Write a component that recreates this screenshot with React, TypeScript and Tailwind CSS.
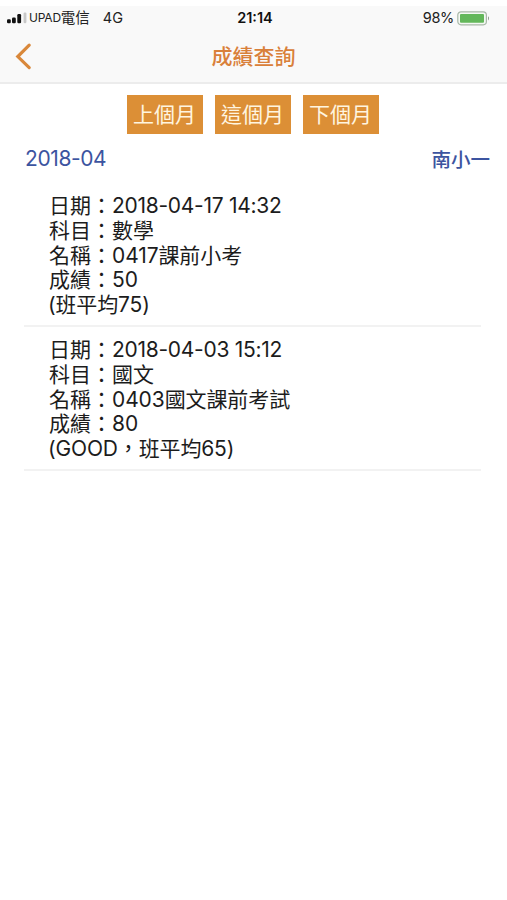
import clsx from "clsx";

type Score = {
  date: string;
  subject: string;
  name: string;
  score: string;
  note: string;
};

const scores: Score[] = [
  {
    date: "2018-04-17 14:32",
    subject: "數學",
    name: "0417課前小考",
    score: "50",
    note: "(班平均75)",
  },
  {
    date: "2018-04-03 15:12",
    subject: "國文",
    name: "0403國文課前考試",
    score: "80",
    note: "(GOOD，班平均65)",
  },
];

const months = ["上個月", "這個月", "下個月"];

function SignalIcon() {
  return (
    <svg width="20" height="12" viewBox="0 0 20 12" className="shrink-0">
      <rect x="0" y="7.2" width="3.8" height="4" rx="1.2" fill="#111" />
      <rect x="5" y="5.6" width="3.8" height="5.6" rx="1.2" fill="#111" />
      <rect x="10.3" y="2" width="3.8" height="9.2" rx="1.2" fill="#111" />
      <rect x="16.6" y="0.4" width="2.8" height="10.8" rx="1.2" fill="#c8c8c8" />
    </svg>
  );
}

function BatteryIcon() {
  return (
    <svg width="33" height="15" viewBox="0 0 33 15" className="shrink-0">
      <rect
        x="0.8"
        y="0.8"
        width="28.6"
        height="13"
        rx="3.2"
        fill="#f4f8f3"
        stroke="#a9b8a8"
        strokeWidth="1.2"
      />
      <rect x="3" y="3" width="24" height="8.8" rx="1" fill="#63b75a" />
      <path d="M31 5.2c1.3.6 1.3 3.6 0 4.2z" fill="#8c968b" />
    </svg>
  );
}

function StatusBar() {
  return (
    <div className="grid h-6 grid-cols-[1fr_auto_1fr] items-center pr-1 pl-[7px] text-[#222]">
      <div className="flex items-center">
        <SignalIcon />
        <span className="ml-[2px] text-[12px] tracking-[-0.2px]">UPAD</span>
        <span className="text-[14.5px]">電信</span>
        <span className="ml-[13px] text-[14.5px]">4G</span>
      </div>
      <span className="text-[14.5px] font-semibold text-[#111]">21:14</span>
      <div className="flex items-center justify-end gap-[3px] pr-[13px]">
        <span className="text-[14.5px] tracking-[-0.3px]">98%</span>
        <BatteryIcon />
      </div>
    </div>
  );
}

function NavBar() {
  return (
    <div className="grid h-[52px] grid-cols-[1fr_auto_1fr] items-center px-[15px]">
      <button className="w-fit" aria-label="back">
        <svg width="18" height="28" viewBox="0 0 18 28" fill="none">
          <path
            d="M14.2 3.2 2.8 14.6l11.4 11"
            stroke="#d9883b"
            strokeWidth="3.2"
            strokeLinecap="round"
          />
        </svg>
      </button>
      <h1 className="pt-px text-[21px] font-medium text-[#d9803a]">成績查詢</h1>
    </div>
  );
}

function Field({
  label,
  value,
  className,
}: {
  label: string;
  value: string;
  className?: string;
}) {
  return (
    <p>
      {label}：<span className={className}>{value}</span>
    </p>
  );
}

export default function App() {
  return (
    <div
      className="h-[900px] w-[507px] overflow-hidden bg-white pt-[6px] font-[Inter,'Noto_Sans_CJK_TC',sans-serif]"
      lang="zh-TW"
    >
      <header className="h-[78px] border-b-2 border-[#ececec] bg-[#f9f9f9]">
        <StatusBar />
        <NavBar />
      </header>

      <main>
        <div className="mt-[11px] flex justify-center gap-3 pr-[2px]">
          {months.map((month) => (
            <button
              key={month}
              className="h-[39px] w-[76px] bg-[#dc8f36] text-[21px] leading-[39px] text-[#fff5e0]"
            >
              {month}
            </button>
          ))}
        </div>

        <div className="mt-3 flex h-[26px] items-center justify-between pr-[17px] pl-[25px] text-[#3c54a0]">
          <span className="text-[21px] tracking-[-0.4px]">2018-04</span>
          <span className="pt-[3px] text-[19.5px] font-medium">南小一</span>
        </div>

        <ul className="mt-[12px] pr-[26px] pl-[24px]">
          {scores.map((item, i) => (
            <li
              key={item.date}
              className={clsx(
                "border-b-2 border-[#f2f2f2] pl-[25px] text-[21px] leading-[24.8px] text-[#1c1c1c]",
                i === 0 ? "h-[143px] pt-[10px]" : "h-[144px] pt-[11px]",
              )}
            >
              <Field
                label="日期"
                value={item.date}
                className="tracking-[-0.28px]"
              />
              <Field label="科目" value={item.subject} />
              <Field
                label="名稱"
                value={item.name}
                className="tracking-[-0.1px]"
              />
              <Field label="成績" value={item.score} />
              <p className="-ml-px tracking-[-0.15px]">{item.note}</p>
            </li>
          ))}
        </ul>
      </main>
    </div>
  );
}
